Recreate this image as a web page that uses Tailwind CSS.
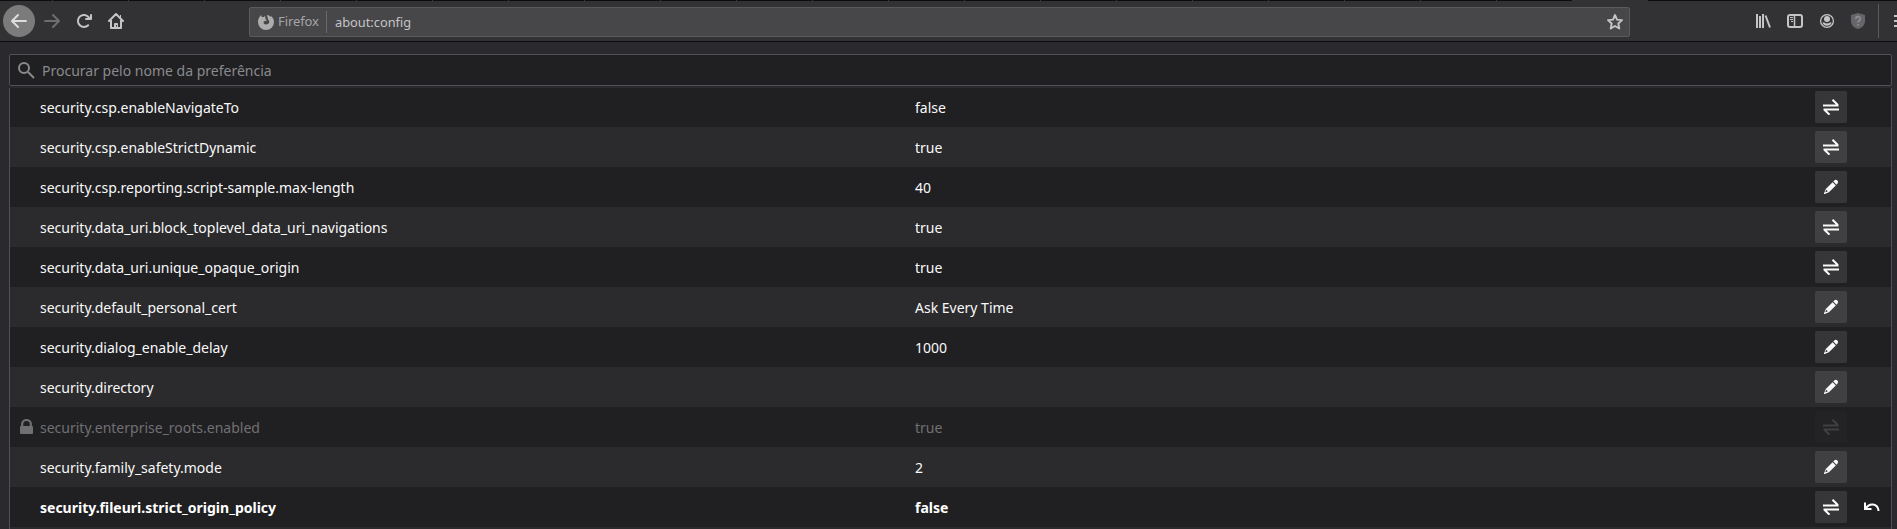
<!DOCTYPE html>
<html lang="pt-BR"><head><meta charset="utf-8"><title>about:config</title>
<script src="https://cdn.jsdelivr.net/npm/@tailwindcss/browser@4"></script></head>
<body class="w-[1897px] h-[529px] overflow-hidden bg-[#2a2a2e] font-['Noto_Sans',sans-serif] text-[#f9f9fa]">
<svg class="hidden">
<symbol id="toggle" viewBox="0 0 16 16"><path d="M0 6.500h15.500M9.500 .8l5.300 5.200M16 10.500H.5M6.500 15.700l-5.300-5.200" fill="none" stroke="currentColor" stroke-width="2"/></symbol>
<symbol id="edit" viewBox="0 0 16 16"><path fill="currentColor" d="M14.4 1.6a2.300 2.300 0 0 0-3.200 0l-.9.9 3.200 3.200.9-.9a2.300 2.300 0 0 0 0-3.200zM9.600 3.200l-6.600 6.600a1 1 0 0 0-.2.300L1 14.300a.5.5 0 0 0 .7.700l4.200-1.800.3-.2 6.600-6.600zM4.800 12.300l-2 .9-.4-.4.900-2z"/></symbol>
<symbol id="undo" viewBox="0 0 16 16"><path d="M1 3.500v6.500h6.500M2 9.500c3-6 12-5.500 12.500 2.500" fill="none" stroke="currentColor" stroke-width="2"/></symbol>
</svg>
<div class="flex h-px bg-[#0c0c0d]" id="tabs"></div>
<header class="flex h-[40px] items-center bg-[#323234] text-[#c4c4c6] *:shrink-0">
<div class="ml-[3px] flex size-8 items-center justify-center rounded-full bg-[#7b7b7c] text-[#dddddd]"><svg class="size-4" viewBox="0 0 16 16" fill="none" stroke="currentColor" stroke-width="2" stroke-linecap="round" stroke-linejoin="round"><path d="M15 8H1.500M7 2L1 8l6 6"/></svg></div>
<svg class="ml-[9px] size-4 text-[#6d6d6f]" viewBox="0 0 16 16" fill="none" stroke="currentColor" stroke-width="2" stroke-linecap="round" stroke-linejoin="round"><path d="M1 8h13.500M9 2l6 6-6 6"/></svg>
<svg class="ml-4 size-4" viewBox="0 0 16 16"><path fill="currentColor" d="M15 1a1 1 0 0 0-1 1v2.400A7 7 0 1 0 8 15a7 7 0 0 0 4.900-2.100 1 1 0 0 0-1.400-1.400A5 5 0 1 1 12 5h-2a1 1 0 0 0 0 2h5a1 1 0 0 0 1-1V2a1 1 0 0 0-1-1z"/></svg>
<svg class="ml-4 size-4" viewBox="0 0 16 16"><path fill="none" stroke="currentColor" stroke-width="2" stroke-linecap="round" stroke-linejoin="round" d="M1 8l7-7 7 7M3 7v8h10V7"/><path fill="currentColor" fill-rule="evenodd" d="M6 15v-4a1 1 0 0 1 1-1h2a1 1 0 0 1 1 1v4zM8 12v1.500h1V12zM12 2h1v4l-1-1z"/></svg>
<div class="ml-[125px] mt-px flex h-[30px] w-[1381px] items-center rounded-[2px] border border-[#5a5a5c] bg-[#474749] pl-2">
<svg class="size-4 text-[#adadae]" viewBox="0 0 16 16"><path fill="currentColor" fill-rule="evenodd" d="M1.500 3L3 1l.8 2L6 3l1-1.500L7.500 5 9 6.500 7 7c-2 0-2 3.500 1 3.500 4 0 4-4 2-5L9 1c2 0 3 1 3.500 2l.5-1c2 1.500 3 4 3 6A8 8 0 0 1 0 8c0-2 .5-4 1.500-5z"/></svg>
<span class="ml-1 w-[41px] text-[13px] tracking-[-0.1px] text-[#a5a5a7]">Firefox</span>
<span class="ml-[7px] h-[22px] w-px bg-[#6a6a6c]"></span>
<span class="ml-2 pt-[2px] text-[12.8px]">about:config</span>
<svg class="ml-auto mr-[6px] size-4" viewBox="0 0 16 16"><path fill="none" stroke="currentColor" stroke-width="1.900" stroke-linejoin="round" d="M8 1l2 4.600 5 .5-3.700 3.400 1 5L8 12l-4.300 2.500 1-5L1 6.100l5-.5z"/></svg>
</div>
<svg class="ml-[125px] size-4" viewBox="0 0 16 16" fill="none" stroke="currentColor" stroke-width="2"><path d="M2 1v14M5 3v12M8 1v14M10.500 2.500L15 14.500"/></svg>
<svg class="ml-4 size-4" viewBox="0 0 16 16" fill="none" stroke="currentColor"><rect x="1" y="2" width="14" height="12" rx="2" stroke-width="2"/><path stroke-width="1.500" d="M7.500 2v12"/><path d="M3 4.500h3M3 6.500h3M4 8.500h2"/></svg>
<svg class="ml-4 size-4" viewBox="0 0 16 16"><circle cx="8" cy="8" r="6.400" fill="none" stroke="currentColor" stroke-width="1.300"/><circle cx="8" cy="6" r="3" fill="currentColor"/><path fill="currentColor" d="M3.300 9.500h2c1.200 1.200 4.200 1.200 5.400 0h2A5 5 0 0 1 3.300 9.500z"/></svg>
<svg class="ml-[15px] size-4" viewBox="0 0 16 16"><path fill="#65656a" d="M8 0l7 2v6c0 4-3 7-7 8-4-1-7-4-7-8V2z"/><path fill="none" stroke="#8e8e92" stroke-width="1.700" d="M5.800 6c0-3 4.500-3 4.500-.3C10.300 7.500 8 7.500 8 9.500M8 11v1.700"/></svg>
<span class="ml-[12px] h-[34px] w-px bg-[#5a5a5c]"></span>
<svg class="ml-[15px] h-4 w-[3px]" viewBox="0 0 3 16"><path fill="currentColor" d="M0 2h3v2H0zM0 7h3v2H0zM0 12h3v2H0z"/></svg>
</header>
<div class="h-px bg-[#0c0c0d]"></div>
<main class="ml-[9px] mt-3 w-[1883px]">
<div class="flex h-8 items-center rounded-[2px] border border-[#515155] bg-[#202023] pl-[7px] text-sm text-[#8a8a8d]"><svg class="size-[18px]" viewBox="0 0 18 18" fill="none" stroke="currentColor" stroke-width="2"><circle cx="7" cy="7" r="5"/><path d="M11 11l6 6"/></svg><span class="ml-[7px] pt-[2px]">Procurar pelo nome da preferência</span></div>
<div class="mt-[2px] border-x border-[#515155]" id="rows"></div>
</main>
<script>
document.getElementById("tabs").innerHTML='<i class="w-[53px] border-r border-[#3c3c3e]"></i>'+'<i class="w-[76px] border-r border-[#3c3c3e]"></i>'.repeat(20)+'<i class="w-[75px] bg-[#323234]"></i>';
// name, value, action icon, state
const data=[["security.csp.enableNavigateTo","false","toggle"],["security.csp.enableStrictDynamic","true","toggle"],["security.csp.reporting.script-sample.max-length","40","edit"],["security.data_uri.block_toplevel_data_uri_navigations","true","toggle"],["security.data_uri.unique_opaque_origin","true","toggle"],["security.default_personal_cert","Ask Every Time","edit"],["security.dialog_enable_delay","1000","edit"],["security.directory","","edit"],["security.enterprise_roots.enabled","true","toggle","locked"],["security.family_safety.mode","2","edit"],["security.fileuri.strict_origin_policy","false","toggle","modified"]];
document.getElementById("rows").innerHTML=data.map(([n,v,i,s])=>`<div class="flex h-10 first:h-[39px] first:pb-px items-center odd:bg-[#202023] even:bg-[#2b2b2d] text-sm ${s=="locked"?"text-[#707072]":s=="modified"?"font-bold text-white":""}"><span class="w-[30px] pl-[10px]">${s=="locked"?'<svg class="h-4 w-[13px]" viewBox="0 0 12 16" preserveAspectRatio="none"><path fill="currentColor" fill-rule="evenodd" d="M1 7V5a5 5 0 0 1 10 0v2q1 0 1 1v6q0 1-1 1H1q-1 0-1-1V8q0-1 1-1zm2 0h6V5a3 3 0 0 0-6 0z"/></svg>':''}</span><span class="w-[875px] pt-[2px]">${n}</span><span class="w-[900px] pt-[2px]">${v}</span><span class="flex size-8 items-center justify-center rounded-[2px] ${s=="locked"?"bg-[#232326] text-[#404043]":"bg-white/10"}"><svg class="size-4"><use href="#${i}"/></svg></span>${s=="modified"?'<svg class="ml-[17px] size-4"><use href="#undo"/></svg>':''}</div>`).join("")+'<div class="h-[2px] bg-[#2b2b2d]"></div>';
</script>
</body></html>
